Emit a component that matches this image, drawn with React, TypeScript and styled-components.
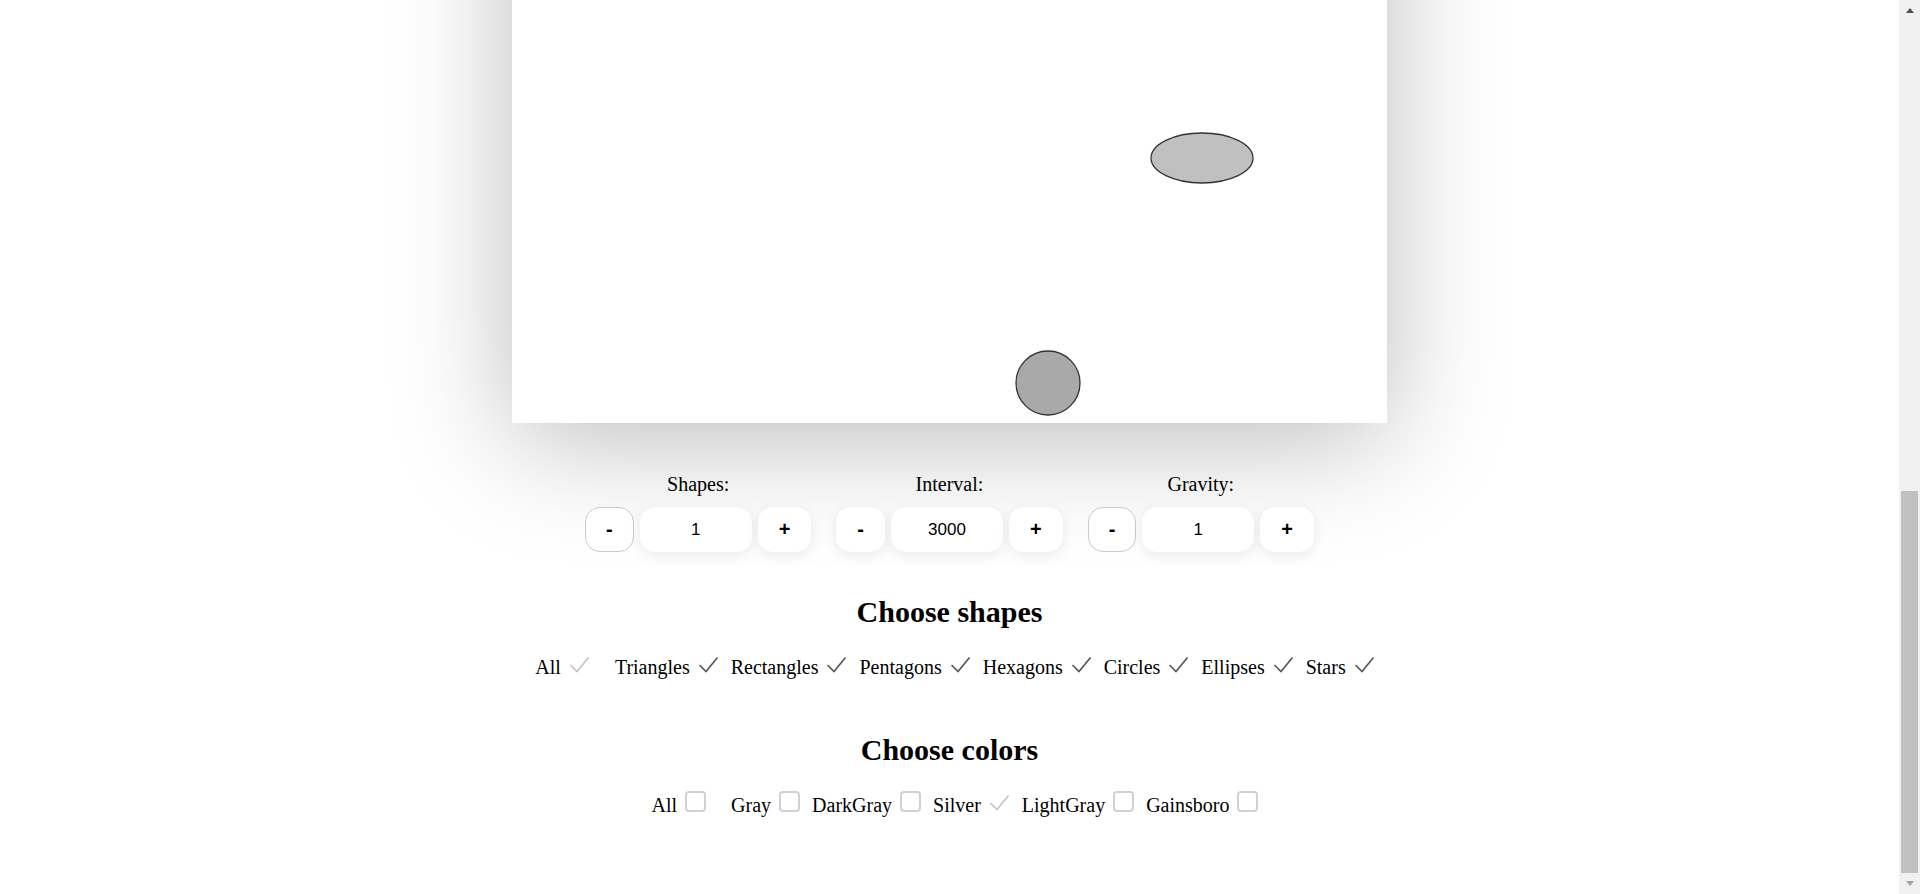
import React, { useCallback, useLayoutEffect, useRef, useState } from "react";
import styled, { createGlobalStyle, css } from "styled-components";

const GlobalStyle = createGlobalStyle`
  html, body {
    margin: 0;
    padding: 0;
    overflow: hidden;
    background: #ffffff;
  }
  body {
    font-family: "Liberation Serif", "Times New Roman", serif;
    color: #000;
  }
  * { box-sizing: border-box; }
`;

const CANVAS_W = 875;
const CANVAS_H = 1474;

const Frame = styled.div`
  display: flex;
  height: 100vh;
  width: 100vw;
`;

const Scroller = styled.div`
  flex: 1;
  height: 100%;
  overflow-y: scroll;
  overflow-x: hidden;
  scrollbar-width: none;
  &::-webkit-scrollbar {
    display: none;
  }
`;

const ScrollBar = styled.div`
  width: 21px;
  height: 100%;
  background: #f1f1f1;
  display: flex;
  flex-direction: column;
  flex-shrink: 0;
`;

const ArrowButton = styled.div<{ $dir: "up" | "down"; $active: boolean }>`
  height: 21px;
  display: flex;
  align-items: center;
  justify-content: center;
  &::after {
    content: "";
    width: 0;
    height: 0;
    border-left: 4.5px solid transparent;
    border-right: 4.5px solid transparent;
    ${(p) =>
      p.$dir === "up"
        ? css`
            border-bottom: 5px solid ${p.$active ? "#505050" : "#a3a3a3"};
          `
        : css`
            border-top: 5px solid ${p.$active ? "#505050" : "#a3a3a3"};
          `}
  }
`;

const Rail = styled.div`
  flex: 1;
  position: relative;
`;

const Thumb = styled.div`
  position: absolute;
  left: 2px;
  right: 2px;
  background: #c1c1c1;
`;

const Page = styled.main`
  display: flex;
  flex-direction: column;
  align-items: center;
  padding: 50px 0 77px;
`;

const Canvas = styled.div`
  width: ${CANVAS_W}px;
  height: ${CANVAS_H}px;
  background: #ffffff;
  box-shadow: 0 16px 110px rgba(0, 0, 0, 0.27);
  flex-shrink: 0;
`;

const Drawing = styled.svg`
  display: block;
  width: 100%;
  height: 100%;
`;

const Controls = styled.div`
  display: flex;
  gap: 25px;
  margin-top: 50px;
`;

const ControlGroup = styled.div`
  display: flex;
  flex-direction: column;
  align-items: center;
  gap: 11px;
`;

const ControlLabel = styled.span`
  font-size: 20px;
  line-height: 23px;
`;

const Stepper = styled.div`
  display: flex;
  gap: 6px;
`;

const StepButton = styled.button`
  height: 45px;
  padding: 0 20px;
  border-radius: 15px;
  background: #ffffff;
  font-family: "Liberation Sans", Arial, sans-serif;
  font-weight: 700;
  font-size: 20px;
  color: #000;
  cursor: pointer;
  border: 1px solid transparent;
  box-shadow: 0 4px 14px rgba(0, 0, 0, 0.08);
  ${(p) =>
    p.disabled &&
    css`
      border-color: #c9c9c9;
      box-shadow: none;
      cursor: default;
    `}
`;

const ValueInput = styled.input`
  width: 112px;
  height: 45px;
  border: none;
  border-radius: 15px;
  background: #ffffff;
  text-align: center;
  font-family: "Liberation Sans", Arial, sans-serif;
  font-size: 17px;
  color: #000;
  box-shadow: 0 4px 14px rgba(0, 0, 0, 0.08);
  outline: none;
`;

const Heading = styled.h2<{ $top: number }>`
  margin: ${(p) => p.$top}px 0 24px;
  font-size: 30px;
  line-height: 34px;
  font-weight: 700;
`;

const OptionRow = styled.div`
  display: flex;
  align-items: baseline;
  padding-left: 11px;
`;

const Option = styled.label<{ $wide?: boolean }>`
  display: inline-flex;
  align-items: baseline;
  gap: 8px;
  font-size: 20px;
  line-height: 24px;
  margin-right: ${(p) => (p.$wide ? 25 : 12)}px;
  cursor: pointer;
  &:last-child {
    margin-right: 0;
  }
`;

const Box = styled.span<{ $checked: boolean; $muted: boolean }>`
  display: inline-block;
  width: 21px;
  height: 21px;
  border-radius: 4px;
  border: 2px solid ${(p) => (p.$checked ? "transparent" : "#cfd1d6")};
  color: ${(p) => (p.$muted ? "#c3c3c3" : "#555555")};
  position: relative;
  svg {
    position: absolute;
    left: -2px;
    top: -2px;
  }
`;

function CheckMark() {
  return (
    <svg width="21" height="21" viewBox="0 0 21 21" fill="none">
      <polyline
        points="1.5,12 8,18.5 19.5,4.5"
        stroke="currentColor"
        strokeWidth="1.6"
        strokeLinejoin="miter"
      />
    </svg>
  );
}

type Opt = { name: string; checked: boolean; muted?: boolean };

function OptionList({ items }: { items: Opt[] }) {
  return (
    <OptionRow>
      {items.map((it, i) => (
        <Option key={it.name} $wide={i === 0}>
          <span>{it.name}</span>
          <Box $checked={it.checked} $muted={!!it.muted}>
            {it.checked && <CheckMark />}
          </Box>
        </Option>
      ))}
    </OptionRow>
  );
}

function Control({ label, value, min }: { label: string; value: number; min: number }) {
  return (
    <ControlGroup>
      <ControlLabel>{label}</ControlLabel>
      <Stepper>
        <StepButton disabled={value <= min}>-</StepButton>
        <ValueInput type="text" value={String(value)} readOnly />
        <StepButton>+</StepButton>
      </Stepper>
    </ControlGroup>
  );
}

const shapes: Opt[] = [
  { name: "All", checked: true, muted: true },
  { name: "Triangles", checked: true },
  { name: "Rectangles", checked: true },
  { name: "Pentagons", checked: true },
  { name: "Hexagons", checked: true },
  { name: "Circles", checked: true },
  { name: "Ellipses", checked: true },
  { name: "Stars", checked: true },
];

const colors: Opt[] = [
  { name: "All", checked: false },
  { name: "Gray", checked: false },
  { name: "DarkGray", checked: false },
  { name: "Silver", checked: true, muted: true },
  { name: "LightGray", checked: false },
  { name: "Gainsboro", checked: false },
];

type Metrics = { top: number; client: number; total: number };

export default function App() {
  const ref = useRef<HTMLDivElement>(null);
  const [m, setM] = useState<Metrics>({ top: 0, client: 1, total: 1 });

  const measure = useCallback(() => {
    const el = ref.current;
    if (!el) return;
    setM({ top: el.scrollTop, client: el.clientHeight, total: el.scrollHeight });
  }, []);

  useLayoutEffect(() => {
    const el = ref.current;
    if (el) el.scrollTop = el.scrollHeight;
    measure();
  }, [measure]);

  const railH = typeof window !== "undefined" ? window.innerHeight - 42 : 852;
  const thumbH = (railH * m.client) / m.total;
  const thumbTop = (railH * m.top) / m.total;
  const atTop = m.top <= 0;
  const atBottom = m.top + m.client >= m.total - 1;

  return (
    <>
      <GlobalStyle />
      <Frame>
        <Scroller ref={ref} onScroll={measure}>
          <Page>
            <Canvas>
              <Drawing viewBox={`0 0 ${CANVAS_W} ${CANVAS_H}`}>
                <ellipse
                  cx={690}
                  cy={CANVAS_H - 265}
                  rx={51}
                  ry={25}
                  fill="#c0c0c0"
                  stroke="#333333"
                  strokeWidth={1.3}
                />
                <circle
                  cx={536}
                  cy={CANVAS_H - 40}
                  r={32}
                  fill="#a9a9a9"
                  stroke="#333333"
                  strokeWidth={1.3}
                />
              </Drawing>
            </Canvas>
            <Controls>
              <Control label="Shapes:" value={1} min={1} />
              <Control label="Interval:" value={3000} min={500} />
              <Control label="Gravity:" value={1} min={1} />
            </Controls>
            <Heading $top={43}>Choose shapes</Heading>
            <OptionList items={shapes} />
            <Heading $top={54}>Choose colors</Heading>
            <OptionList items={colors} />
          </Page>
        </Scroller>
        <ScrollBar>
          <ArrowButton $dir="up" $active={!atTop} />
          <Rail>
            <Thumb style={{ top: thumbTop, height: thumbH }} />
          </Rail>
          <ArrowButton $dir="down" $active={!atBottom} />
        </ScrollBar>
      </Frame>
    </>
  );
}
